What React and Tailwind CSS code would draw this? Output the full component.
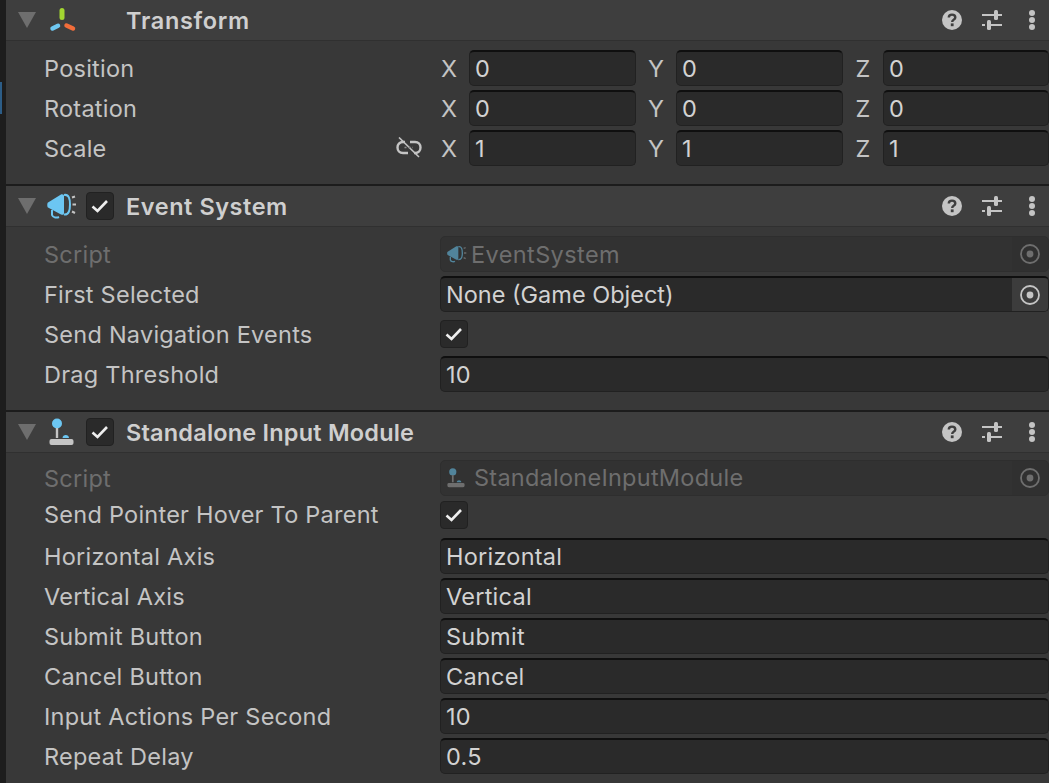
const font = { fontFamily: "Inter, 'Liberation Sans', sans-serif" };

function Triangle() {
  return (
    <svg width="18" height="16" viewBox="0 0 18 16" className="shrink-0">
      <path d="M0 0H18L9 16Z" fill="#6e6e6e" />
    </svg>
  );
}

function TransformIcon() {
  return (
    <svg width="28" height="26" viewBox="0 0 28 26" className="shrink-0">
      <path d="M14 3.5V10.5" stroke="#a2d531" strokeWidth="5" strokeLinecap="round" />
      <path d="M4.5 21.5L10 18.8" stroke="#6fc8f2" strokeWidth="4.5" strokeLinecap="round" />
      <path d="M18.5 18.5L25 21.5" stroke="#f26d3a" strokeWidth="4.5" strokeLinecap="round" />
    </svg>
  );
}

function SpeakerIcon({ dim, w = 30, h = 26 }) {
  const c = dim ? "#51849b" : "#6cc6f2";
  const g = dim ? "#6a6a6a" : "#c4c4c4";
  return (
    <svg width={w} height={h} viewBox="0 0 30 26" className="shrink-0">
      <path d="M1 9.5L14 1.5C16 1 17 2 17 3V20C17 22 16 22 14 21.5L1 14.5C0 14 0 10 1 9.5Z" fill={c} />
      <path d="M17 2C22 1 23 6 23 11.5C23 17 22 22 17 21.5" fill="none" stroke={c} strokeWidth="2" />
      <path d="M5 17L5 22C6 25 10 25 12 24" fill="none" stroke={c} strokeWidth="2" />
      <path d="M25 4.5L28 3.5M25.5 11.5H29M25 18.5L28 20" stroke={g} strokeWidth="2" />
    </svg>
  );
}

function JoystickIcon({ dim, w = 25, h = 28 }) {
  const c = dim ? "#51849b" : "#6cc6f2";
  const g = dim ? "#6e6e6e" : "#c4c4c4";
  return (
    <svg width={w} height={h} viewBox="0 0 25 28" className="shrink-0">
      <circle cx="8" cy="5.5" r="5" fill={c} />
      <rect x="6.8" y="10" width="2.4" height="10" fill={g} />
      <path d="M13.5 20C13.5 16 20 16 20 20Z" fill={c} />
      <rect x="0.5" y="21" width="24" height="6" rx="2" fill={g} />
    </svg>
  );
}

function HeaderActions() {
  return (
    <div className="ml-auto flex items-center">
      <svg width="20" height="20" viewBox="0 0 20 20" className="absolute right-[87px]">
        <circle cx="10" cy="10" r="10" fill="#c4c4c4" />
        <path d="M6.8 7.6C6.8 5.6 8.2 4.6 10 4.6C11.9 4.6 13.3 5.7 13.3 7.4C13.3 9.6 10.2 9.7 10.2 12" fill="none" stroke="#3e3e3e" strokeWidth="2.4" />
        <rect x="8.8" y="13.4" width="2.8" height="2.8" fill="#3e3e3e" />
      </svg>
      <svg width="20" height="20" viewBox="0 0 20 20" className="absolute right-[47px]">
        <path d="M0 5H12M16 5H20M0 15H3M7 15H20" stroke="#c4c4c4" strokeWidth="2" />
        <rect x="12" y="0" width="4" height="10" rx="1.5" fill="#c4c4c4" />
        <rect x="5" y="10" width="4" height="10" rx="1.5" fill="#c4c4c4" />
      </svg>
      <svg width="8" height="22" viewBox="0 0 8 22" className="absolute right-[13px]">
        <circle cx="4" cy="4" r="3" fill="#c4c4c4" />
        <circle cx="4" cy="11" r="3" fill="#c4c4c4" />
        <circle cx="4" cy="18" r="3" fill="#c4c4c4" />
      </svg>
    </div>
  );
}

function Check({ className = "" }) {
  return (
    <div className={`flex h-7 w-7 shrink-0 items-center justify-center rounded-[4px] border border-[#212121] bg-[#2a2a2a] ${className}`}>
      <svg width="18" height="14" viewBox="0 0 18 14">
        <path d="M1.5 7.5L6.5 12L16 2" fill="none" stroke="#eeeeee" strokeWidth="2.6" />
      </svg>
    </div>
  );
}

function Header({ icon, check, title, tracking }) {
  return (
    <div className="relative flex h-[41px] items-center border-b border-[#303030] bg-[#3e3e3e]">
      <div className="ml-[12px] w-[18px]"><Triangle /></div>
      <div className="ml-[11px] flex w-[29px] justify-center">{icon}</div>
      <div className="ml-[10px] w-7">{check && <Check />}</div>
      <span className={`ml-[12px] pt-[2px] text-[23.5px] font-semibold text-[#cfcfcf] ${tracking}`}>{title}</span>
      <HeaderActions />
    </div>
  );
}

function Field({ children, className = "" }) {
  return (
    <div className={`flex h-9 min-w-0 items-center overflow-hidden rounded-[5px] border border-[#212121] border-t-2 border-t-[#0f0f0f] bg-[#2a2a2a] pl-[5px] text-[#d2d2d2] ${className}`}>
      {children}
    </div>
  );
}

function Label({ children, dim, flush }) {
  return (
    <span className={`w-[434px] shrink-0 pl-[38px] ${flush ? "" : "pt-[2px]"} ${dim ? "text-[#6e6e6e]" : "text-[#c4c4c4]"}`}>{children}</span>
  );
}

function Axis({ a, v, w }) {
  return (
    <div className={`flex items-center ${w}`}>
      <span className="w-[28px] shrink-0 pr-[12px] pt-[2px] text-center text-[#c4c4c4]">{a}</span>
      <Field className="flex-1">{v}</Field>
    </div>
  );
}

function Vec({ name, x, y, z, link }) {
  return (
    <div className="relative flex h-10 items-center">
      <span className="w-[435px] shrink-0 pl-[38px] pt-[2px] text-[#c4c4c4]">{name}</span>
      {link && (
        <svg width="26" height="22" viewBox="0 0 26 22" className="absolute left-[390px] top-[9px]">
          <path d="M9 5H7C3.5 5 1.5 7.5 1.5 10.5C1.5 13.5 3.5 16 7 16H12M14 5H19C22.5 5 24.5 7.5 24.5 10.5C24.5 13.5 22.5 16 19 16H18" fill="none" stroke="#c4c4c4" strokeWidth="2.4" />
          <path d="M3 0.5L23 20" stroke="#c4c4c4" strokeWidth="1.6" />
          <path d="M8.5 10.5H17" stroke="#8a8a8a" strokeWidth="1.4" strokeDasharray="2 2" />
        </svg>
      )}
      <div className="flex flex-1 items-center">
        <Axis a="X" v={x} w="w-[207px] pr-[12px]" />
        <Axis a="Y" v={y} w="w-[207px] pr-[12px]" />
        <Axis a="Z" v={z} w="flex-1" />
      </div>
    </div>
  );
}

function Target({ dim }) {
  const c = dim ? "#6e6e6e" : "#c4c4c4";
  return (
    <div className={`flex h-full w-[36px] shrink-0 items-center justify-center ${dim ? "bg-[#303030]" : "bg-[#3c3c3c]"}`}>
      <svg width="20" height="20" viewBox="0 0 20 20">
        <circle cx="10" cy="10" r="9" fill="none" stroke={c} strokeWidth="1.8" />
        <circle cx="10" cy="10" r="3.4" fill={c} />
      </svg>
    </div>
  );
}

function TextRow({ label, value }) {
  return (
    <div className="flex h-10 items-center">
      <Label>{label}</Label>
      <Field className="flex-1">{value}</Field>
    </div>
  );
}

function CheckRow({ label, flush }) {
  return (
    <div className="flex h-10 items-center">
      <Label flush={flush}>{label}</Label>
      <Check />
    </div>
  );
}

function ScriptRow({ icon, value, gap, textPad }) {
  return (
    <div className="flex h-10 items-center">
      <Label dim>Script</Label>
      <div className="flex h-9 min-w-0 flex-1 items-center overflow-hidden rounded-[5px] border border-[#2e2e2e] bg-[#323232] pl-[6px] text-[#6e6e6e]">
        <div className={`flex items-center ${gap}`}>
          {icon}
          <span className={textPad}>{value}</span>
        </div>
        <div className="ml-auto h-full"><Target dim /></div>
      </div>
    </div>
  );
}

export default function App() {
  return (
    <div className="flex h-[783px] w-[1049px] overflow-hidden bg-[#191919] text-[23.5px] leading-none tracking-[0.25px]" style={font}>
      <div className="relative w-[6px] shrink-0 bg-[#1d1d1d]">
        <div className="absolute left-0 top-[82px] h-[32px] w-[2px] bg-[#2c5d87]" />
      </div>
      <div className="min-w-0 flex-1 bg-[#383838]">
        <Header title="Transform" tracking="tracking-[0.7px]" icon={<TransformIcon />} />
        <div className="flex h-[143px] flex-col pt-[7px]">
          <Vec name="Position" x="0" y="0" z="0" />
          <Vec name="Rotation" x="0" y="0" z="0" />
          <Vec name="Scale" x="1" y="1" z="1" link />
        </div>
        <div className="h-[2px] bg-[#1c1c1c]" />
        <Header title="Event System" tracking="tracking-[0.55px]" check icon={<SpeakerIcon />} />
        <div className="flex h-[183px] flex-col pt-[7px]">
          <ScriptRow value="EventSystem" gap="gap-[4px]" textPad="pt-[2px] tracking-[0.4px]" icon={<SpeakerIcon dim w={20} h={18} />} />
          <div className="flex h-10 items-center">
            <Label>First Selected</Label>
            <Field className="flex-1 pr-0">
              <span className="tracking-[0px]">None (Game Object)</span>
              <div className="ml-auto h-full"><Target /></div>
            </Field>
          </div>
          <CheckRow label="Send Navigation Events" />
          <TextRow label="Drag Threshold" value="10" />
        </div>
        <div className="h-[2px] bg-[#1c1c1c]" />
        <Header title="Standalone Input Module" tracking="tracking-[0.2px]" check icon={<JoystickIcon />} />
        <div className="flex flex-col pt-[5px]">
          <ScriptRow value="StandaloneInputModule" gap="gap-[9px]" icon={<JoystickIcon dim w={18} h={20} />} />
          <div className="-mt-[3px]"><CheckRow label="Send Pointer Hover To Parent" flush /></div>
          <div className="mt-[1px]"><TextRow label="Horizontal Axis" value="Horizontal" /></div>
          <TextRow label="Vertical Axis" value="Vertical" />
          <TextRow label="Submit Button" value="Submit" />
          <TextRow label="Cancel Button" value="Cancel" />
          <TextRow label="Input Actions Per Second" value="10" />
          <TextRow label="Repeat Delay" value="0.5" />
        </div>
      </div>
    </div>
  );
}
